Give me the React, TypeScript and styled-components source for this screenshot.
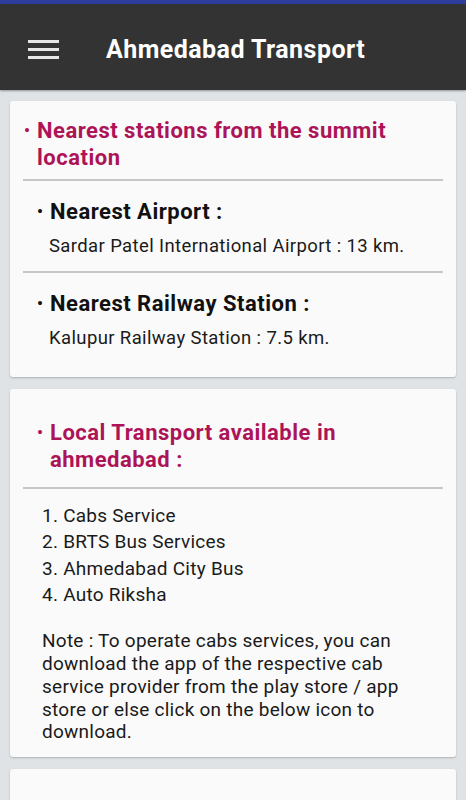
import React from "react";
import styled, { createGlobalStyle } from "styled-components";

const GlobalStyle = createGlobalStyle`
  html, body {
    margin: 0;
    padding: 0;
    background: #dfe3e6;
    font-family: Roboto, "Noto Sans", "Liberation Sans", sans-serif;
  }
  * { box-sizing: border-box; }
`;

const Page = styled.div`
  width: 466px;
  height: 800px;
  overflow: hidden;
  background: #dfe3e6;
`;

const StatusStrip = styled.div`
  height: 4px;
  background: #2f3e9c;
`;

const AppBar = styled.header`
  height: 86px;
  background: #333333;
  display: flex;
  align-items: center;
  padding: 4px 0 0 28px;
  box-shadow: 0 1px 2px rgba(0, 0, 0, 0.35);
`;

const MenuButton = styled.div`
  width: 31px;
  display: flex;
  flex-direction: column;
  gap: 5px;
`;

const MenuBar = styled.span`
  display: block;
  height: 3px;
  background: #e6e6e6;
`;

const Title = styled.h1`
  margin: 0 0 0 47px;
  color: #ffffff;
  font-size: 25px;
  font-weight: 700;
  letter-spacing: 0.45px;
`;

const Content = styled.main`
  padding: 11px 10px 0;
  display: flex;
  flex-direction: column;
  gap: 12px;
`;

const Card = styled.section<{ $pt: number; $pb: number }>`
  background: #fafafa;
  border-radius: 3px;
  box-shadow: 0 1px 2px rgba(0, 0, 0, 0.22);
  padding: ${(p) => p.$pt}px 13px ${(p) => p.$pb}px;
`;

const BulletRow = styled.div<{
  $indent: number;
  $lh: number;
  $color: string;
}>`
  display: flex;
  padding-left: ${(p) => p.$indent}px;
  font-size: 22px;
  letter-spacing: 0.5px;
  line-height: ${(p) => p.$lh}px;
  font-weight: 700;
  color: ${(p) => p.$color};
`;

const Bullet = styled.span`
  flex: none;
  width: 13px;
  font-size: 0.75em;
`;

const Divider = styled.hr<{ $mt: number; $mb: number }>`
  margin: ${(p) => p.$mt}px 0 ${(p) => p.$mb}px;
  border: none;
  height: 2px;
  background: #c6c6c6;
`;

const Detail = styled.p`
  margin: 9px 0 0 26px;
  font-size: 18.5px;
  letter-spacing: 0.38px;
  line-height: 24px;
  color: #1a1a1a;
`;

const List = styled.ol`
  margin: 0;
  padding: 0 0 0 19px;
  list-style: none;
  font-size: 19px;
  letter-spacing: 0.25px;
  line-height: 26.3px;
  color: #1a1a1a;
`;

const Note = styled.p`
  margin: 22px 20px 0 19px;
  font-size: 19px;
  letter-spacing: 0.25px;
  line-height: 22.8px;
  color: #1a1a1a;
`;

const PINK = "#ad1457";

export default function App() {
  return (
    <>
      <GlobalStyle />
      <Page>
        <StatusStrip />
        <AppBar>
          <MenuButton>
            <MenuBar />
            <MenuBar />
            <MenuBar />
          </MenuButton>
          <Title>Ahmedabad Transport</Title>
        </AppBar>
        <Content>
          <Card $pt={16} $pb={27}>
            <BulletRow $indent={1} $lh={27} $color={PINK}>
              <Bullet>•</Bullet>
              <span>Nearest stations from the summit location</span>
            </BulletRow>
            <Divider $mt={8} $mb={18} />
            <BulletRow $indent={14} $lh={26} $color="#111">
              <Bullet>•</Bullet>
              <span>Nearest Airport :</span>
            </BulletRow>
            <Detail>Sardar Patel International Airport : 13 km.</Detail>
            <Divider $mt={13} $mb={18} />
            <BulletRow $indent={14} $lh={26} $color="#111">
              <Bullet>•</Bullet>
              <span>Nearest Railway Station :</span>
            </BulletRow>
            <Detail>Kalupur Railway Station : 7.5 km.</Detail>
          </Card>
          <Card $pt={30} $pb={13}>
            <BulletRow $indent={14} $lh={27} $color={PINK}>
              <Bullet>•</Bullet>
              <span>Local Transport available in ahmedabad :</span>
            </BulletRow>
            <Divider $mt={14} $mb={14} />
            <List>
              <li>1. Cabs Service</li>
              <li>2. BRTS Bus Services</li>
              <li>3. Ahmedabad City Bus</li>
              <li>4. Auto Riksha</li>
            </List>
            <Note>
              Note : To operate cabs services, you can download the app of the
              respective cab service provider from the play store / app store or
              else click on the below icon to download.
            </Note>
          </Card>
          <Card $pt={40} $pb={40} />
        </Content>
      </Page>
    </>
  );
}
